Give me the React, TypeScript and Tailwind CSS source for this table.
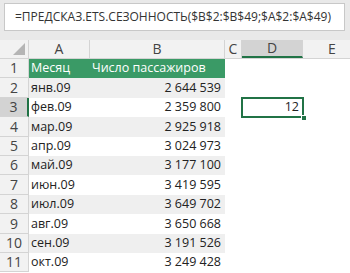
const rows = [
  { m: "янв.09", v: "2 644 539" },
  { m: "фев.09", v: "2 359 800" },
  { m: "мар.09", v: "2 925 918" },
  { m: "апр.09", v: "3 024 973" },
  { m: "май.09", v: "3 177 100" },
  { m: "июн.09", v: "3 419 595" },
  { m: "июл.09", v: "3 649 702" },
  { m: "авг.09", v: "3 650 668" },
  { m: "сен.09", v: "3 191 526" },
  { m: "окт.09", v: "3 249 428" },
];

// row 1 is the table header, then data rows 2..11
const heights = [19, 20, 19, 20, 19, 19, 20, 19, 20, 19, 19];

const App = () => {
  return (
    <div
      className="w-[350px] h-[273px] overflow-hidden bg-white text-[#222]"
      style={{ fontFamily: '"Open Sans", "Noto Sans", sans-serif' }}
    >
      {/* Formula bar */}
      <div className="bg-[#e9e9e9] pt-[3px] pb-[9px] pl-[4px] pr-[5px]">
        <div className="h-[28px] bg-white border border-[#c8c8c8] flex items-center pl-[10px] text-[12px] text-[#333] whitespace-nowrap">
          =ПРЕДСКАЗ.ETS.СЕЗОННОСТЬ($B$2:$B$49;$A$2:$A$49)
        </div>
      </div>

      {/* Column headers */}
      <div className="flex h-[19px] bg-[#f2f2f2] border-b border-[#d4d4d4] text-[14px] text-[#444] leading-none">
        <div className="w-[29px] shrink-0 border-r border-[#d4d4d4] relative">
          <svg className="absolute left-[13px] top-[2px]" width="13" height="13" viewBox="0 0 13 13">
            <polygon points="0,13 12,1 12,13" fill="#b5b5b5" />
          </svg>
        </div>
        <div className="w-[61px] shrink-0 border-r border-[#d4d4d4] flex items-center justify-center">A</div>
        <div className="w-[135px] shrink-0 border-r border-[#d4d4d4] flex items-center justify-center">B</div>
        <div className="w-[17px] shrink-0 border-r border-[#d4d4d4] flex items-center justify-center">C</div>
        <div className="w-[61px] shrink-0 border-r border-[#d4d4d4] bg-[#d3d3d3] border-b-2 border-b-[#217346] flex items-center justify-center">
          D
        </div>
        <div className="w-[59px] shrink-0 border-r border-[#d4d4d4] flex items-center justify-center">E</div>
        <div className="flex-1" />
      </div>

      {/* Rows */}
      {heights.map((h, i) => {
        const n = i + 1;
        const head = n === 1;
        const data = rows[i - 1];
        const band = !head && n % 2 === 0;
        const selected = n === 3;
        return (
          <div key={n} className={`flex ${h === 20 ? "h-[20px]" : "h-[19px]"} text-[12.5px] leading-none`}>
            <div
              className={`w-[29px] shrink-0 border-b border-[#d4d4d4] flex items-center justify-center text-[14px] text-[#444] ${
                selected ? "bg-[#d3d3d3] border-r-2 border-r-[#217346]" : "bg-[#f2f2f2] border-r border-[#d4d4d4]"
              }`}
            >
              {n}
            </div>
            <div
              className={`w-[61px] shrink-0 flex items-center pl-[2px] ${
                head ? "bg-[#3a9a66] text-white" : band ? "bg-[#efefef]" : "bg-white"
              }`}
            >
              {head ? "Месяц" : data.m}
            </div>
            <div
              className={`w-[135px] shrink-0 flex items-center ${
                head ? "bg-[#3a9a66] text-white pl-[2px]" : band ? "bg-[#efefef] justify-end pr-[4px]" : "bg-white justify-end pr-[4px]"
              }`}
            >
              {head ? "Число пассажиров" : data.v}
            </div>
            <div className="w-[17px] shrink-0" />
            <div className="w-[61px] shrink-0 relative flex items-center justify-end pr-[4px]">
              {selected && (
                <>
                  <div className="absolute -left-[1px] -top-[1px] -right-[1px] -bottom-[1px] border-2 border-[#217346]" />
                  <div className="absolute -right-[4px] -bottom-[4px] w-[6px] h-[6px] bg-[#217346] border border-white" />
                  <span>12</span>
                </>
              )}
            </div>
            <div className="flex-1" />
          </div>
        );
      })}
    </div>
  );
};

export default App;
